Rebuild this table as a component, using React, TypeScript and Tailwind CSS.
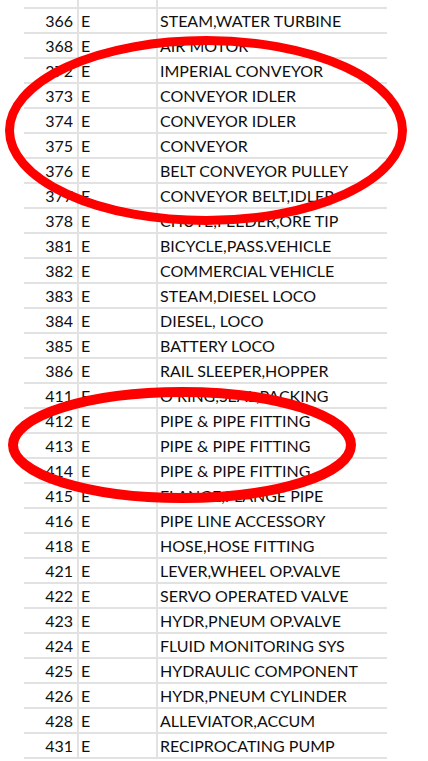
const rows: [string, string][] = [
  ["366", "STEAM,WATER TURBINE"],
  ["368", "AIR MOTOR"],
  ["372", "IMPERIAL CONVEYOR"],
  ["373", "CONVEYOR IDLER"],
  ["374", "CONVEYOR IDLER"],
  ["375", "CONVEYOR"],
  ["376", "BELT CONVEYOR PULLEY"],
  ["377", "CONVEYOR BELT,IDLER"],
  ["378", "CHUTE,FEEDER,ORE TIP"],
  ["381", "BICYCLE,PASS.VEHICLE"],
  ["382", "COMMERCIAL VEHICLE"],
  ["383", "STEAM,DIESEL LOCO"],
  ["384", "DIESEL, LOCO"],
  ["385", "BATTERY LOCO"],
  ["386", "RAIL SLEEPER,HOPPER"],
  ["411", "O RING,SEAL,PACKING"],
  ["412", "PIPE & PIPE FITTING"],
  ["413", "PIPE & PIPE FITTING"],
  ["414", "PIPE & PIPE FITTING"],
  ["415", "FLANGE,FLANGE PIPE"],
  ["416", "PIPE LINE ACCESSORY"],
  ["418", "HOSE,HOSE FITTING"],
  ["421", "LEVER,WHEEL OP.VALVE"],
  ["422", "SERVO OPERATED VALVE"],
  ["423", "HYDR,PNEUM OP.VALVE"],
  ["424", "FLUID MONITORING SYS"],
  ["425", "HYDRAULIC COMPONENT"],
  ["426", "HYDR,PNEUM CYLINDER"],
  ["428", "ALLEVIATOR,ACCUM"],
  ["431", "RECIPROCATING PUMP"],
];

function Row({ code, name }: { code: string; name: string }) {
  return (
    <div className="flex h-[25px] border-t-2 border-[#e2e2e2]">
      <div className="w-[53px] pr-[4px] pt-[1px] text-right leading-[22px]">{code}</div>
      <div className="w-[79px] border-l-2 border-[#e2e2e2] pl-[2px] pt-[1px] leading-[22px]">E</div>
      <div className="flex-1 border-l-2 border-[#e2e2e2] pl-[2px] pt-[1px] leading-[22px] whitespace-nowrap">
        {name}
      </div>
    </div>
  );
}

export default function App() {
  return (
    <div className="relative w-[428px] h-[761px] bg-white overflow-hidden">
      <div
        className="ml-[24px] w-[363px] text-[16px] text-[#0f0f0f]"
        style={{ fontFamily: "Lato, 'Open Sans', sans-serif" }}
      >
        <div className="flex h-[7px]">
          <div className="w-[53px]" />
          <div className="w-[79px] border-l-2 border-[#e2e2e2]" />
          <div className="flex-1 border-l-2 border-[#e2e2e2]" />
        </div>
        {rows.map(([code, name], i) => (
          <Row key={i} code={code} name={name} />
        ))}
        <div className="border-t-2 border-[#e2e2e2]" />
      </div>
      <svg
        className="absolute inset-0 pointer-events-none"
        width="428"
        height="761"
        viewBox="0 0 428 761"
      >
        <ellipse cx="206" cy="130.5" rx="196.5" ry="90" fill="none" stroke="#ff0000" strokeWidth="9" />
        <ellipse cx="182" cy="445" rx="169" ry="53" fill="none" stroke="#ff0000" strokeWidth="10" />
      </svg>
    </div>
  );
}
